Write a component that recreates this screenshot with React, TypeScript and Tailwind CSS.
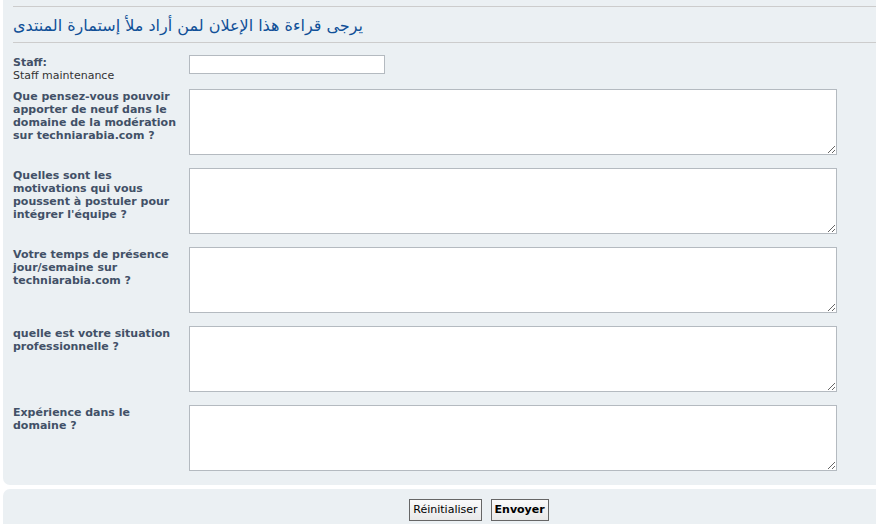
const rows = [
  "Que pensez-vous pouvoir apporter de neuf dans le domaine de la modération sur techniarabia.com ?",
  "Quelles sont les motivations qui vous poussent à postuler pour intégrer l'équipe ?",
  "Votre temps de présence jour/semaine sur techniarabia.com ?",
  "quelle est votre situation professionnelle ?",
  "Expérience dans le domaine ?",
];

const FieldRow = ({ label }: { label: string }) => (
  <div className="flex items-start h-[79px]">
    <label className="w-[168px] pt-[1px] text-[11px] leading-[13px] font-bold text-[#425067]">{label}</label>
    <textarea className="ml-[8px] w-[648px] h-[66px] bg-white border border-[#b4bac0] outline-none" />
  </div>
);

export default function App() {
  return (
    <div className="w-[876px] h-[524px] overflow-hidden bg-white font-['DejaVu_Sans',Verdana,sans-serif]">
      <div className="w-[958px]">
        {/* form panel */}
        <div className="ml-[3px] w-[952px] bg-[#ebf0f3] rounded-b-[7px] px-[10px] pt-[6px] pb-[1px]">
          <h3 className="h-[37px] border-y border-[#cccccc] text-[16px] leading-[37px] text-[#115098] font-normal">
            يرجى قراءة هذا الإعلان لمن أراد ملأ إستمارة المنتدى
          </h3>
          <div className="pt-[12px]">
            <div className="flex items-start h-[34px]">
              <label className="w-[168px] pt-[1px] text-[11px] leading-[13px] text-[#333]">
                <span className="font-bold text-[#425067]">Staff:</span>
                <br />
                Staff maintenance
              </label>
              <input type="text" className="ml-[8px] w-[196px] h-[19px] bg-white border border-[#b4bac0] outline-none" />
            </div>
            {rows.map((r) => (
              <FieldRow key={r} label={r} />
            ))}
          </div>
        </div>

        {/* buttons panel */}
        <div className="ml-[3px] mt-[4px] w-[952px] h-[60px] bg-[#ebf0f3] rounded-t-[7px] flex justify-center pt-[10px] gap-[9px]">
          <button className="h-[22px] px-[3px] border border-[#666] bg-gradient-to-b from-[#fafafa] to-[#e9e9e9] text-[11px] text-[#000]">
            Réinitialiser
          </button>
          <button className="h-[22px] px-[3px] border border-[#666] bg-gradient-to-b from-[#fafafa] to-[#e9e9e9] text-[11px] font-bold text-[#000]">
            Envoyer
          </button>
        </div>
      </div>
    </div>
  );
}
